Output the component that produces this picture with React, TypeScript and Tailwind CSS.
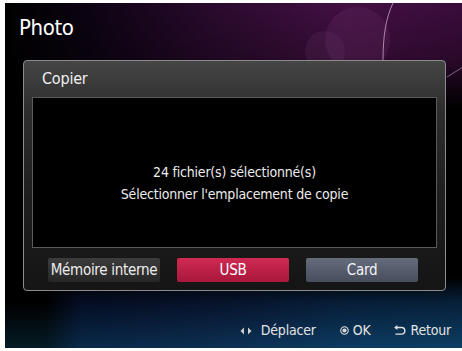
const font = "font-['DejaVu_Sans_Condensed','DejaVu_Sans',sans-serif] [font-stretch:condensed]";

function NavArrows() {
  return (
    <svg width="12" height="8" viewBox="0 0 12 8" className="mr-[9px]">
      <path d="M4 0.5 L0.5 4 L4 7.5 Z" fill="#cfcfcf" />
      <path d="M8 0.5 L11.5 4 L8 7.5 Z" fill="#cfcfcf" />
    </svg>
  );
}

function OkIcon() {
  return (
    <svg width="9" height="9" viewBox="0 0 10 10" className="mr-[4px]">
      <circle cx="5" cy="5" r="4.2" fill="none" stroke="#d8d8d8" strokeWidth="1.2" />
      <circle cx="5" cy="5" r="2.3" fill="#d8d8d8" />
    </svg>
  );
}

function BackIcon() {
  return (
    <svg width="12" height="11" viewBox="0 0 12 11" className="mr-[5px]">
      <path
        d="M1 2.5 H7.5 A3.3 3.3 0 0 1 7.5 9.1 H1.5"
        fill="none"
        stroke="#e2e2e2"
        strokeWidth="1.4"
      />
      <path d="M0.2 2.5 L3.4 0 V5 Z" fill="#e2e2e2" />
    </svg>
  );
}

function Button({ label, tone }: { label: string; tone: "dark" | "red" | "slate" }) {
  const tones = {
    dark: "bg-gradient-to-b from-[#3c3c3c] to-[#262626] text-[#ececec]",
    red: "bg-gradient-to-b from-[#d02a52] to-[#a8173c] text-white",
    slate: "bg-gradient-to-b from-[#656c7c] to-[#474d5b] text-[#f2f3f6]",
  };
  return (
    <div
      className={`w-[112px] h-[24px] rounded-[2px] flex items-center justify-center text-[15px] tracking-[-0.3px] ${tones[tone]}`}
    >
      {label}
    </div>
  );
}

export default function App() {
  return (
    <div className={`w-[462px] h-[351px] bg-white ${font}`}>
      <div className="ml-[5px] mt-[3px] w-[457px] h-[345px] relative overflow-hidden bg-black">
        {/* backdrop */}
        <div className="absolute inset-x-0 top-0 h-[150px] bg-[linear-gradient(90deg,#000_0%,#0c0312_18%,#2a0a2e_45%,#441044_75%,#3a0c3a_100%)]" />
        <div className="absolute inset-x-0 top-0 h-[150px] bg-[linear-gradient(180deg,rgba(0,0,0,0)_0%,rgba(0,0,0,0.25)_35%,#000_70%)]" />
        <div className="absolute left-[320px] top-[4px] w-[65px] h-[65px] rounded-full bg-[#6a3068]/25" />
        <div className="absolute left-[300px] top-[28px] w-[40px] h-[40px] rounded-full bg-[#7a4878]/15" />
        <svg className="absolute left-[360px] top-0" width="100" height="80" viewBox="0 0 100 80">
          <path d="M28 0 C21 15 18 32 18 58" fill="none" stroke="#d9b8d6" strokeOpacity="0.7" strokeWidth="1" />
          <path d="M82 74 L98 64" fill="none" stroke="#c9a0c6" strokeOpacity="0.6" strokeWidth="1" />
        </svg>
        <div className="absolute inset-x-0 bottom-0 h-[70px] bg-[linear-gradient(90deg,#000_0%,#000_9%,#061230_16%,#0a1a3c_45%,#0a2a50_75%,#0a2e52_100%)]" />
        <div className="absolute inset-x-0 bottom-0 h-[70px] bg-[linear-gradient(180deg,#000_0%,rgba(0,0,0,0.3)_35%,rgba(20,110,150,0.25)_100%)]" />

        <div className="relative flex flex-col h-full">
          <div className="pl-[14px] pt-[10px] h-[57px] text-[22px] leading-[30px] tracking-[-0.4px] text-white">Photo</div>

          <div className="ml-[18px] w-[423px] h-[231px] rounded-[4px] border border-[#8c8c8c] bg-[linear-gradient(180deg,#454545_0%,#2e2e2e_20%,#1e1e1e_60%,#151515_100%)] flex flex-col px-[8px]">
            <div className="h-[36px] pl-[10px] pt-[7px] text-[16px] leading-[22px] tracking-[-0.2px] text-[#f0f0f0]">Copier</div>
            <div className="h-[151px] border border-[#5a5a5a] bg-black flex flex-col items-center justify-center pt-[20px] text-[14px] leading-[22px] tracking-[-0.2px] text-[#ececec]">
              <div>24 fichier(s) sélectionné(s)</div>
              <div>Sélectionner l'emplacement de copie</div>
            </div>
            <div className="flex justify-center gap-[17px] mt-[10px] pr-[3px]">
              <Button label="Mémoire interne" tone="dark" />
              <Button label="USB" tone="red" />
              <Button label="Card" tone="slate" />
            </div>
          </div>

          <div className="flex items-center justify-end pr-[11px] mt-[29px] text-[14px] tracking-[-0.2px] text-[#e4e4e4]">
            <NavArrows />
            <span>Déplacer</span>
            <span className="w-[24px]" />
            <OkIcon />
            <span>OK</span>
            <span className="w-[23px]" />
            <BackIcon />
            <span>Retour</span>
          </div>
        </div>
      </div>
    </div>
  );
}
